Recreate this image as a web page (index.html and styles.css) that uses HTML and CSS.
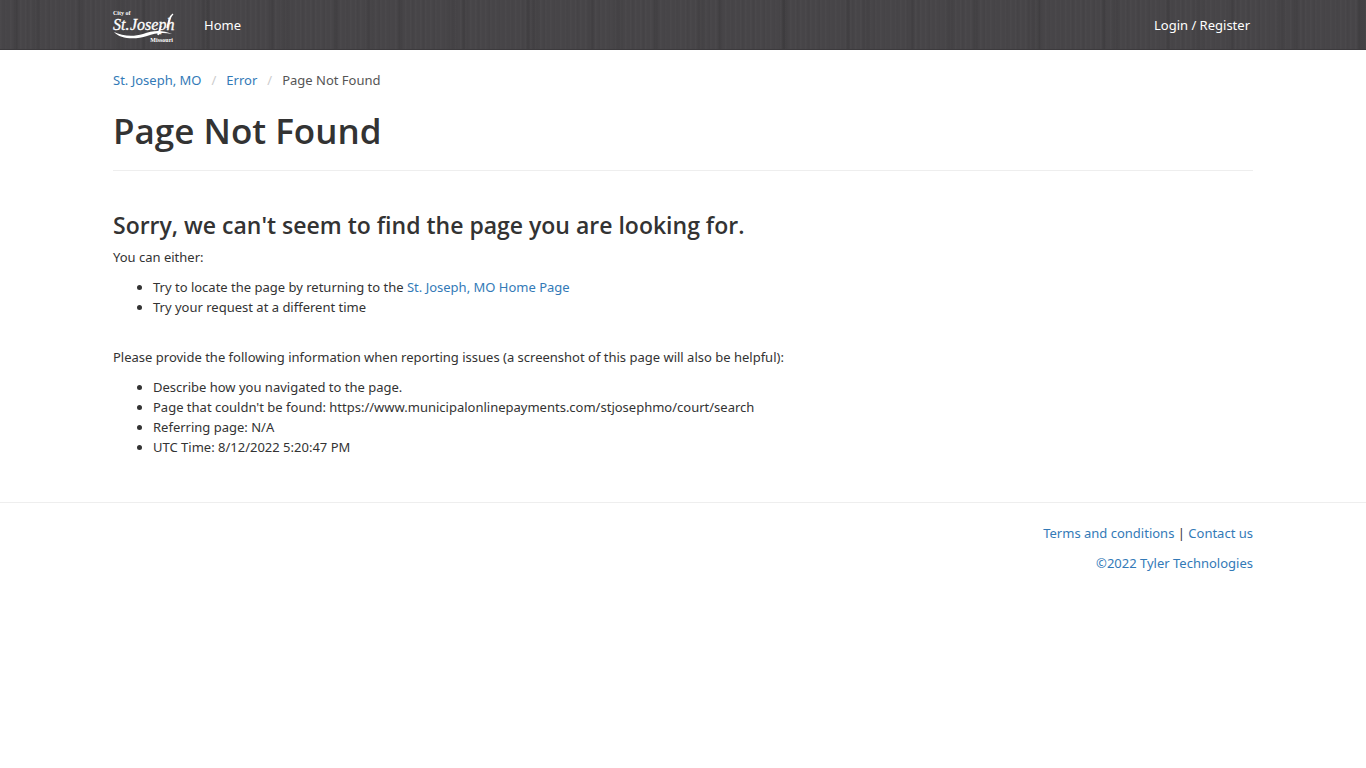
FILE: index.html
```html
<!DOCTYPE html>
<html lang="en">
<head>
<meta charset="utf-8">
<meta name="viewport" content="width=device-width, initial-scale=1">
<title>Page Not Found</title>
<link rel="stylesheet" href="styles.css">
</head>
<body>
<header class="navbar">
  <nav class="container navbar-row" aria-label="Main">
    <a class="brand" href="#" aria-label="City of St. Joseph, Missouri">
      <svg class="logo" viewBox="0 0 62 34" role="img" aria-hidden="true">
        <text class="logo-small" x="0" y="5">City of</text>
        <text class="logo-name" x="0" y="20">St.</text>
        <text class="logo-name" x="17" y="20">Joseph</text>
        <path class="logo-line" d="M54 18C56 10 57 6 60 4"/>
        <path class="logo-line" d="M48 16L45 25"/>
        <path class="logo-swoosh" d="M1 22C9 26 20 27 30 24C40 20 50 20 59 24C50 22 42 23 34 26C22 30 7 29 1 22Z"/>
        <text class="logo-small" x="60" y="32" text-anchor="end">Missouri</text>
      </svg>
    </a>
    <a class="nav-link" href="#">Home</a>
    <a class="nav-link nav-login" href="#">Login / Register</a>
  </nav>
</header>
<main class="container">
  <nav aria-label="Breadcrumb">
    <ol class="breadcrumb">
      <li><a href="#">St. Joseph, MO</a></li>
      <li><a href="#">Error</a></li>
      <li class="current" aria-current="page">Page Not Found</li>
    </ol>
  </nav>
  <h1 class="page-title">Page Not Found</h1>
  <h2 class="message">Sorry, we can't seem to find the page you are looking for.</h2>
  <p class="text">You can either:</p>
  <ul class="list">
    <li>Try to locate the page by returning to the <a href="#">St. Joseph, MO Home Page</a></li>
    <li>Try your request at a different time</li>
  </ul>
  <p class="text">Please provide the following information when reporting issues (a screenshot of this page will also be helpful):</p>
  <ul class="list">
    <li>Describe how you navigated to the page.</li>
    <li>Page that couldn't be found: https://www.municipalonlinepayments.com/stjosephmo/court/search</li>
    <li>Referring page: N/A</li>
    <li>UTC Time: 8/12/2022 5:20:47 PM</li>
  </ul>
</main>
<footer class="footer">
  <div class="container">
    <p class="text"><a href="#">Terms and conditions</a> | <a href="#">Contact us</a></p>
    <p class="text"><a href="#">©2022 Tyler Technologies</a></p>
  </div>
</footer>
</body>
</html>
```
FILE: styles.css
```css
* { box-sizing: border-box; }

body {
  margin: 0;
  background: #fff;
  color: #333;
  font-family: "Segoe UI", "Noto Sans", "Open Sans", sans-serif;
  font-size: 13px;
  line-height: 20px;
}

a { color: #337ab7; text-decoration: none; }
a:hover { text-decoration: underline; }

.container {
  max-width: 1170px;
  margin: 0 auto;
  padding: 0 15px;
}

/* Wood planks: seams every 64px over fine vertical grain */
.navbar {
  border-bottom: 1px solid #3c3a3d;
  background-color: #474548;
  background-image:
    repeating-linear-gradient(90deg, transparent 0 13px, rgba(0, 0, 0, .1) 16px, transparent 19px 64px),
    repeating-linear-gradient(90deg, transparent 0 31px, rgba(0, 0, 0, .05) 37px, transparent 43px 83px),
    repeating-linear-gradient(90deg, rgba(255, 255, 255, .02) 0 1px, transparent 2px 5px),
    repeating-linear-gradient(90deg, transparent 0 4px, rgba(0, 0, 0, .03) 5px 6px, transparent 7px 11px);
}

.navbar-row {
  display: flex;
  align-items: center;
  min-height: 49px;
}

.brand { display: flex; margin-right: 29px; padding-top: 4px; }
.logo { width: 62px; height: 34px; overflow: visible; }
.logo text { fill: #fff; font-family: "Liberation Serif", serif; }
.logo .logo-small { font-size: 6px; font-weight: 700; }
.logo .logo-name { font-size: 16px; font-style: italic; stroke: #fff; stroke-width: .3; }
.logo-swoosh { fill: #fff; }
.logo-line { fill: none; stroke: #fff; stroke-width: 1.5; }

.nav-link { color: #fff; }
.nav-login { margin-left: auto; margin-right: 3px; }

.breadcrumb {
  display: flex;
  flex-wrap: wrap;
  margin: 0;
  padding: 20px 0 0;
  list-style: none;
}
.breadcrumb li + li::before { content: "/"; padding: 0 10px; color: #ccc; }
.breadcrumb .current { color: #555; }

.page-title {
  margin: 20px 0 40px;
  padding-bottom: 19px;
  border-bottom: 1px solid #eee;
  font-family: "Segoe UI", "Open Sans", sans-serif;
  font-size: 35px;
  font-weight: 600;
  line-height: 41px;
}

.message {
  margin: 0 0 8px;
  font-family: "Segoe UI", "Open Sans", sans-serif;
  font-size: 23px;
  font-weight: 600;
  line-height: 28px;
}

.text { margin: 0 0 10px; }
.list { margin: 0 0 30px; padding-left: 40px; }

.footer {
  margin-top: 45px;
  padding-top: 20px;
  border-top: 1px solid #eee;
  text-align: right;
}
```
